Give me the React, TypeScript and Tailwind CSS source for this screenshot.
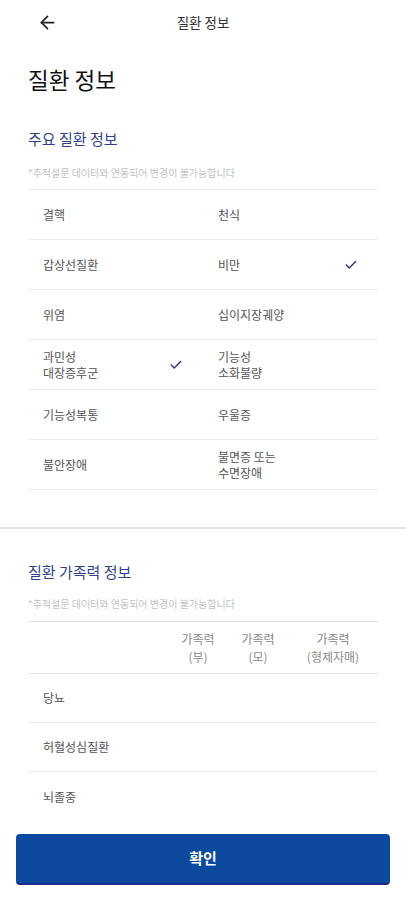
import { ArrowLeft, Check } from "lucide-react";

const diseases: { label: string[]; checked?: boolean }[] = [
  { label: ["결핵"] },
  { label: ["천식"] },
  { label: ["갑상선질환"] },
  { label: ["비만"], checked: true },
  { label: ["위염"] },
  { label: ["십이지장궤양"] },
  { label: ["과민성", "대장증후군"], checked: true },
  { label: ["기능성", "소화불량"] },
  { label: ["기능성복통"] },
  { label: ["우울증"] },
  { label: ["불안장애"] },
  { label: ["불면증 또는", "수면장애"] },
];

const familyRows = ["당뇨", "허혈성심질환", "뇌졸중"];

const NOTE = "*추적설문 데이터와 연동되어 변경이 불가능합니다";

export default function App() {
  return (
    <div
      className="w-[406px] h-[900px] bg-white flex flex-col text-[#555]"
      style={{ fontFamily: '"Noto Sans CJK KR", "Noto Sans", sans-serif' }}
    >
      <header className="relative h-[44px] flex items-center justify-center">
        <button className="absolute left-[37px] top-[12px] text-[#222]">
          <ArrowLeft className="h-[21px] w-[21px]" strokeWidth={2} />
        </button>
        <h1 className="text-[13.5px] text-[#333]">질환 정보</h1>
      </header>

      <div className="px-[28px]">
        <h2 className="mt-[20px] text-[22.5px] leading-[30px] text-[#111]">질환 정보</h2>

        <h3 className="mt-[35px] text-[15px] leading-[20px] text-[#2c3f8f]">주요 질환 정보</h3>
        <p className="mt-[17px] text-[10px] leading-[14px] text-[#c2c2c2]">{NOTE}</p>

        <div className="mt-[9px] grid grid-cols-2 border-t border-[#ececec]">
          {diseases.map((d, i) => (
            <div
              key={i}
              className="h-[50px] flex items-center justify-between pl-[15px] pr-5 border-b border-[#ececec]"
            >
              <span className="text-[12px] leading-[16px]">
                {d.label.map((l) => (
                  <span key={l} className="block">
                    {l}
                  </span>
                ))}
              </span>
              {d.checked && <Check className="h-[14px] w-[14px] text-[#2b3b8c]" strokeWidth={2.5} />}
            </div>
          ))}
        </div>
      </div>

      <div className="mt-[37px] h-[2px] bg-[#e4e4e4]" />

      <div className="px-[28px]">
        <h3 className="mt-[33px] text-[15px] leading-[20px] text-[#2c3f8f]">질환 가족력 정보</h3>
        <p className="mt-[15px] text-[10px] leading-[14px] text-[#c2c2c2]">{NOTE}</p>

        <div className="mt-[10px] border-t border-[#e2e2e2]">
          <div className="grid grid-cols-[140px_60px_60px_1fr] h-[52px] items-center border-b border-[#e2e2e2] text-[12px] leading-[18px] text-[#8a8a8a] text-center">
            <div />
            <div>
              가족력
              <br />
              (부)
            </div>
            <div>
              가족력
              <br />
              (모)
            </div>
            <div>
              가족력
              <br />
              (형제자매)
            </div>
          </div>
          {familyRows.map((r, i) => (
            <div
              key={r}
              className={`h-[49px] flex items-center pl-[15px] text-[12px] ${
                i < familyRows.length - 1 ? "border-b border-[#ececec]" : ""
              }`}
            >
              {r}
            </div>
          ))}
        </div>
      </div>

      <div className="px-[16px] mt-[13px]">
        <button className="w-full h-[51px] rounded-[4px] bg-[#0b4a9e] border-b-2 border-[#1c2a8c] text-white text-[15px] font-bold">
          확인
        </button>
      </div>
    </div>
  );
}
